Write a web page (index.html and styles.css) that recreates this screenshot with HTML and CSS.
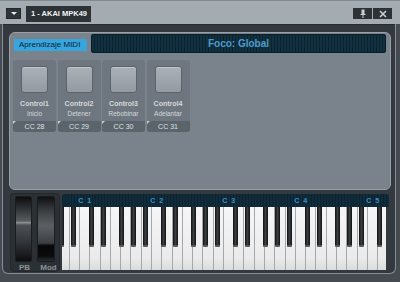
FILE: index.html
```html
<!DOCTYPE html>
<html>
<head>
<meta charset="utf-8">
<link rel="stylesheet" href="styles.css">
</head>
<body>
<div class="topbar">
  <div class="dropdown"><span class="tri"></span></div>
  <div class="tab">1 - AKAI MPK49</div>
  <div class="spacer"></div>
  <div class="winbtns">
    <div class="wbtn"><svg width="8" height="9" viewBox="0 0 8 9"><rect x="2.5" y="0.5" width="3" height="5" fill="#c9ced2"/><rect x="1.5" y="5" width="5" height="1" fill="#c9ced2"/><rect x="3.5" y="6" width="1" height="3" fill="#c9ced2"/></svg></div>
    <div class="wbtn"><svg width="8" height="8" viewBox="0 0 8 8"><path d="M1 1 L7 7 M7 1 L1 7" stroke="#c9ced2" stroke-width="1.6"/></svg></div>
  </div>
</div>
<div class="frame">
  <div class="panel">
    <div class="header">
      <div class="learn">Aprendizaje MIDI</div>
      <div class="focus">Foco: Global</div>
    </div>
    <div class="cards">
      <div class="card"><div class="pad"></div><div class="name">Control1</div><div class="sub">Inicio</div><div class="cc">CC 28</div></div>
      <div class="card"><div class="pad"></div><div class="name">Control2</div><div class="sub">Detener</div><div class="cc">CC 29</div></div>
      <div class="card"><div class="pad"></div><div class="name">Control3</div><div class="sub">Rebobinar</div><div class="cc">CC 30</div></div>
      <div class="card"><div class="pad"></div><div class="name">Control4</div><div class="sub">Adelantar</div><div class="cc">CC 31</div></div>
    </div>
  </div>
  <div class="kbrow">
    <div class="wheels">
      <div class="wheelcols">
        <div class="wheel pb"></div>
        <div class="wheel mod"></div>
      </div>
      <div class="wlabels"><span>PB</span><span>Mod</span></div>
    </div>
    <div class="keyboard">
      <div class="labels">
        <div class="oct"><span>C 1</span></div>
        <div class="oct"><span>C 2</span></div>
        <div class="oct"><span>C 3</span></div>
        <div class="oct"><span>C 4</span></div>
        <div class="oct"><span>C 5</span></div>
      </div>
      <div class="keys" id="keys">
        <div class="whites" id="whites"></div>
      </div>
    </div>
  </div>
</div>
<script src="keys.js"></script>
</body>
</html>
```
FILE: keys.js
```js
(function(){
  var whites = document.getElementById('whites');
  for (var i = 0; i < 32; i++) {
    var w = document.createElement('div');
    w.className = 'wk';
    whites.appendChild(w);
  }
  var keys = document.getElementById('keys');
  var pos = [-3.5, 9];
  var offs = [9.3, 21, 38.7, 51, 63];
  for (var k = 0; k < 4; k++) {
    for (var j = 0; j < offs.length; j++) pos.push(18 + 72 * k + offs[j]);
  }
  pos.push(18 + 288 + 9.3);
  pos.forEach(function(p){
    var b = document.createElement('div');
    b.className = 'bk';
    b.style.left = p + 'px';
    keys.appendChild(b);
  });
})();
```
FILE: styles.css
```css
* { box-sizing: border-box; }
html, body { margin: 0; padding: 0; }
body {
  width: 400px;
  height: 282px;
  overflow: hidden;
  background: #454b50;
  font-family: "Liberation Sans", Arial, sans-serif;
}
.topbar {
  height: 24px;
  background: #a4abb1;
  border-top: 1px solid #838a90;
  display: flex;
  align-items: flex-start;
  padding-left: 6px;
  padding-right: 6px;
}
.dropdown {
  margin-top: 7px;
  width: 15px;
  height: 11px;
  background: #30353a;
  border: 1px solid #23272b;
  display: flex;
  align-items: center;
  justify-content: center;
}
.tri {
  width: 0; height: 0;
  border-left: 3px solid transparent;
  border-right: 3px solid transparent;
  border-top: 3px solid #e8ebed;
}
.tab {
  margin-left: 5px;
  margin-top: 5px;
  height: 16px;
  width: 65px;
  background: #2d3237;
  color: #f2f4f5;
  font-weight: bold;
  font-size: 7.5px;
  line-height: 16px;
  padding-left: 5px;
  white-space: nowrap;
}
.spacer { flex: 1; }
.winbtns {
  margin-top: 7px;
  display: flex;
  gap: 1px;
  margin-right: 2px;
}
.wbtn {
  width: 19px;
  height: 11px;
  background: #2d3237;
  display: flex;
  align-items: center;
  justify-content: center;
}
.frame {
  margin: 0 4px 0 2px;
  height: 250px;
  background: #33393e;
  border: 1px solid #878e94;
  border-top: none;
  border-radius: 0 0 6px 6px;
  padding: 8px 4px 0 6px;
  box-shadow: inset 0 1px 0 #262b2f;
}
.panel {
  width: 382px;
  height: 158px;
  background: #7a838b;
  border: 1px solid #98a0a7;
  border-radius: 6px;
  padding: 1px 4px 0 3px;
}
.header {
  display: flex;
  align-items: flex-start;
  gap: 4px;
  padding-left: 1px;
}
.learn {
  margin-top: 5px;
  width: 73px;
  height: 12px;
  background: #37a5de;
  color: #102430;
  font-size: 8px;
  line-height: 12px;
  padding-left: 5px;
  white-space: nowrap;
  border-radius: 1px;
}
.focus {
  flex: 1;
  height: 19px;
  border-radius: 3px;
  background: repeating-linear-gradient(90deg, #0c2430 0 1px, #113040 1px 3px);
  color: #4e9dcd;
  font-weight: bold;
  font-size: 10px;
  line-height: 19px;
  text-align: center;
  box-shadow: inset 0 0 0 1px #0a1d27;
}
.cards {
  display: flex;
  gap: 1.5px;
  margin-top: 7px;
}
.card {
  width: 43px;
  height: 72px;
  background: #6e777f;
  border-radius: 3px;
  display: flex;
  flex-direction: column;
  align-items: center;
  overflow: hidden;
}
.pad {
  margin-top: 6px;
  width: 27px;
  height: 27px;
  border-radius: 3px;
  background: linear-gradient(#a9b0b6, #939aa1);
  border: 1px solid #5c646b;
  box-shadow: inset 0 1px 0 #c2c7cb;
}
.name {
  margin-top: 6px;
  font-size: 7px;
  font-weight: bold;
  line-height: 9px;
  color: #d4d8db;
}
.sub {
  margin-top: 1px;
  font-size: 6.5px;
  line-height: 9px;
  color: #d4d8db;
}
.cc {
  margin-top: auto;
  width: 100%;
  height: 11px;
  background: #5c646b;
  color: #dde1e4;
  font-size: 7px;
  line-height: 11px;
  text-align: center;
  position: relative;
}
.cc::before {
  content: "";
  position: absolute;
  left: 0; top: 0;
  border-top: 3px solid #c6cbcf;
  border-right: 3px solid transparent;
}
.kbrow {
  display: flex;
  align-items: flex-start;
  margin-top: 3px;
  padding-left: 1px;
}
.wheels {
  width: 50px;
  height: 79px;
  background: #2b3034;
  border: 1px solid #24282b;
  border-radius: 4px;
  padding: 2px 0 0 4px;
}
.wheelcols {
  display: flex;
  gap: 5px;
}
.wheel {
  width: 17px;
  height: 66px;
  border-radius: 2px;
  border: 1px solid #1a1d20;
}
.pb {
  background: linear-gradient(#0c0d0e 0%, #2f3235 18%, #5a5e62 38%, #8a8e92 39%, #8a8e92 40%, #4c5054 44%, #33363a 70%, #0c0d0e 100%);
}
.mod {
  width: 18px;
  background: linear-gradient(#0e0f10 0%, #383b3e 20%, #5c6064 45%, #3c3f42 72%, #070707 76%, #0b0b0b 92%, #2a2d30 100%);
}
.wlabels {
  display: flex;
  gap: 4px;
  margin-top: 1px;
  font-size: 8px;
  font-weight: bold;
  line-height: 9px;
  color: #8b9399;
}
.wlabels span:first-child { width: 20px; text-align: center; }
.wlabels span:last-child { width: 22px; text-align: center; }
.keyboard {
  margin-left: 2px;
  width: 324px;
}
.labels {
  margin-top: 1px;
  height: 13px;
  border-radius: 3px 3px 0 0;
  background: repeating-linear-gradient(90deg, #0c2431 0 1px, #102c3b 1px 3px);
  display: flex;
  padding-left: 18px;
  overflow: hidden;
  width: 327px;
}
.oct {
  flex: 0 0 72px;
}
.oct span {
  display: flex;
  justify-content: center;
  width: 10.29px;
  white-space: nowrap;
  font-size: 7px;
  font-weight: bold;
  line-height: 13px;
  color: #3f8fc5;
  letter-spacing: 1px;
}
.keys {
  position: relative;
  height: 63px;
  overflow: hidden;
  background: #f0f0f0;
}
.whites {
  display: flex;
  margin-left: -2.6px;
  height: 100%;
}
.wk {
  flex: 0 0 10.29px;
  height: 100%;
  background: linear-gradient(#f6f6f6, #ebebeb 80%, #dcdcdc);
  border-right: 1px solid #a4a8ac;
}
.bk {
  position: absolute;
  top: 0;
  width: 5px;
  height: 40px;
  background: linear-gradient(90deg, #0f1011, #3c3f42 50%, #0f1011);
  border-bottom: 2px solid #55595d;
  border-radius: 0 0 1px 1px;
}
```
